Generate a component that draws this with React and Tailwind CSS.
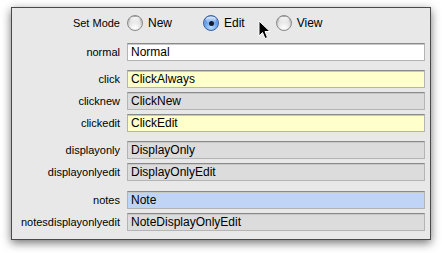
import React from "react";

const font = { fontFamily: '"Liberation Sans", Arial, sans-serif' };

function Radio({ checked }) {
  if (checked) {
    return (
      <span className="relative inline-block w-[16px] h-[16px] rounded-full border border-[#3b5f9a] bg-[radial-gradient(circle_at_50%_80%,#b9dcff_0%,#6aa6ec_45%,#2f6bcf_100%)] shadow-[inset_0_1px_1px_rgba(255,255,255,0.6)] shrink-0">
        <span className="absolute left-[2px] top-[1px] w-[10px] h-[6px] rounded-full bg-[linear-gradient(#ffffff_0%,rgba(255,255,255,0.1)_100%)] opacity-80" />
        <span className="absolute left-[4.5px] top-[4.5px] w-[5px] h-[5px] rounded-full bg-[#111a33]" />
      </span>
    );
  }
  return (
    <span className="relative inline-block w-[16px] h-[16px] rounded-full border border-[#8a8a8a] bg-[radial-gradient(circle_at_50%_85%,#ffffff_0%,#e6e6e6_45%,#c4c4c4_100%)] shadow-[inset_0_1px_2px_rgba(0,0,0,0.25)] shrink-0">
      <span className="absolute left-[2px] top-[1px] w-[10px] h-[6px] rounded-full bg-[linear-gradient(#ffffff_0%,rgba(255,255,255,0)_100%)] opacity-90" />
    </span>
  );
}

function Option({ checked, label }) {
  return (
    <span className="flex items-center gap-[5px] text-[12px] text-black leading-none">
      <Radio checked={checked} />
      <span>{label}</span>
    </span>
  );
}

const bgs = {
  white: "bg-white",
  yellow: "bg-[#ffffcc]",
  gray: "bg-[#dcdcdc]",
  blue: "bg-[#c0d4f8]",
};

function Row({ label, value, color, mt }) {
  return (
    <div className={`flex items-center gap-[7px] ${mt}`}>
      <div className="w-[108px] text-right text-[11px] text-black leading-none">{label}</div>
      <div
        className={`w-[298px] h-[18px] border border-[#b4b4b4] border-t-[#8a8a8a] shadow-[inset_0_1px_0_#c8c8c8] flex items-center pl-[3px] text-[12px] text-black leading-none ${bgs[color]}`}
      >
        {value}
      </div>
    </div>
  );
}

export default function App() {
  return (
    <div className="w-[442px] h-[253px] bg-white pt-[7px] pl-[11px] overflow-hidden" style={font}>
      <div className="relative w-[420px] h-[233px] border border-[#4a4a4a] bg-[#e8e8e8] shadow-[0_3px_9px_rgba(0,0,0,0.55)] flex flex-col pt-[7px]">
        <div className="flex items-center gap-[7px] h-[16px]">
          <div className="w-[108px] text-right text-[11px] text-black leading-none">Set Mode</div>
          <div className="flex items-center gap-[31px]">
            <Option label="New" />
            <Option label="Edit" checked />
            <Option label="View" />
          </div>
        </div>
        <Row label="normal" value="Normal" color="white" mt="mt-[12px]" />
        <Row label="click" value="ClickAlways" color="yellow" mt="mt-[9px]" />
        <Row label="clicknew" value="ClickNew" color="gray" mt="mt-[4px]" />
        <Row label="clickedit" value="ClickEdit" color="yellow" mt="mt-[4px]" />
        <Row label="displayonly" value="DisplayOnly" color="gray" mt="mt-[9px]" />
        <Row label="displayonlyedit" value="DisplayOnlyEdit" color="gray" mt="mt-[4px]" />
        <Row label="notes" value="Note" color="blue" mt="mt-[10px]" />
        <Row label="notesdisplayonlyedit" value="NoteDisplayOnlyEdit" color="gray" mt="mt-[4px]" />

        <svg
          className="absolute left-[246px] top-[12px]"
          width="13"
          height="20"
          viewBox="0 0 13 20"
        >
          <path
            d="M1 1 L1 16 L4.5 12.5 L7 18.5 L9.5 17.5 L7 11.5 L12 11.5 Z"
            fill="#000"
            stroke="#fff"
            strokeWidth="1"
            strokeLinejoin="round"
          />
        </svg>
      </div>
    </div>
  );
}
